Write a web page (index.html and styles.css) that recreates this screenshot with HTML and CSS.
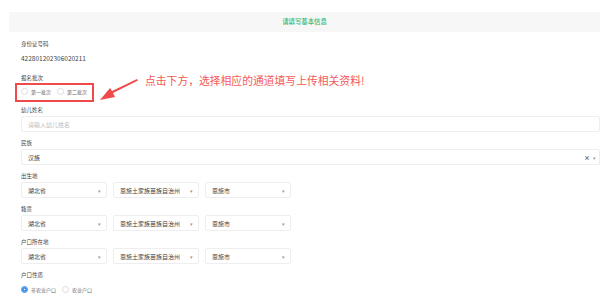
FILE: index.html
```html
<!DOCTYPE html>
<html>
    <head>
        <meta charset="UTF-8" />
        <title>请填写基本信息</title>
        <link rel="stylesheet" href="styles.css">
    </head>
    <body>
        <div class="page">
            <div class="panel-title">请填写基本信息</div>

            <div class="form">
                <div class="field field-first">
                    <div class="label">身份证号码</div>
                    <div class="value">422801202306020211</div>
                </div>

                <div class="field field-batch">
                    <div class="label">报名批次</div>
                    <div class="radio-group">
                        <span class="radio"><span class="dot"></span>第一批次</span>
                        <span class="radio"><span class="dot"></span>第二批次</span>
                    </div>
                </div>

                <div class="field field-name">
                    <div class="label">幼儿姓名</div>
                    <div class="input placeholder">请输入幼儿姓名</div>
                </div>

                <div class="field">
                    <div class="label">民族</div>
                    <div class="input">
                        <span>汉族</span>
                        <span class="icons"><span class="clear">&times;</span><span class="caret">&#9662;</span></span>
                    </div>
                </div>

                <div class="field">
                    <div class="label">出生地</div>
                    <div class="select-row">
                        <div class="input select"><span>湖北省</span><span class="caret">&#9662;</span></div>
                        <div class="input select"><span>恩施土家族苗族自治州</span><span class="caret">&#9662;</span></div>
                        <div class="input select"><span>恩施市</span><span class="caret">&#9662;</span></div>
                    </div>
                </div>

                <div class="field">
                    <div class="label">籍贯</div>
                    <div class="select-row">
                        <div class="input select"><span>湖北省</span><span class="caret">&#9662;</span></div>
                        <div class="input select"><span>恩施土家族苗族自治州</span><span class="caret">&#9662;</span></div>
                        <div class="input select"><span>恩施市</span><span class="caret">&#9662;</span></div>
                    </div>
                </div>

                <div class="field">
                    <div class="label">户口所在地</div>
                    <div class="select-row">
                        <div class="input select"><span>湖北省</span><span class="caret">&#9662;</span></div>
                        <div class="input select"><span>恩施土家族苗族自治州</span><span class="caret">&#9662;</span></div>
                        <div class="input select"><span>恩施市</span><span class="caret">&#9662;</span></div>
                    </div>
                </div>

                <div class="field">
                    <div class="label label-last">户口性质</div>
                    <div class="radio-group">
                        <span class="radio checked"><span class="dot"></span>非农业户口</span>
                        <span class="radio"><span class="dot"></span>农业户口</span>
                    </div>
                </div>
            </div>

            <!-- annotation drawn over the screenshot -->
            <div class="note-box"></div>
            <svg class="note-arrow" width="44" height="24" viewBox="0 0 44 24">
                <polygon points="41,0 42,1.5 17,14 19,18 4,21 14,9 16,12" fill="#f04a4a" />
            </svg>
            <div class="note-text">点击下方，选择相应的通道填写上传相关资料!</div>
        </div>
    </body>
</html>
```

FILE: styles.css
```css
body {
    margin: 0;
    background-color: #fff;
    font-family: "Noto Sans CJK SC", "Noto Sans", sans-serif;
    color: #555;
    overflow: hidden;
}

.page {
    position: relative;
    width: 600px;
    height: 307px;
    padding-left: 9px;
    padding-top: 12px;
    box-sizing: border-box;
}

.panel-title {
    height: 20px;
    line-height: 20px;
    background-color: #f7f7f7;
    color: #34b87a;
    font-size: 6.4px;
    font-weight: 500;
    text-align: center;
}

.form {
    padding-left: 12px;
}

.field {
    padding-top: 7px;
}

.field-first {
    padding-top: 8px;
}

.field-first .label {
    margin-bottom: 5px;
}

.field-batch {
    padding-top: 11px;
}

.field-batch .label {
    margin-bottom: 4px;
}

.field-name {
    padding-top: 10px;
}

.label {
    height: 8px;
    line-height: 8px;
    font-size: 5.5px;
    color: #444;
    margin-bottom: 2px;
}

.label-last {
    margin-bottom: 5px;
}

.value {
    line-height: 10px;
    font-size: 6.5px;
    color: #444;
}

.radio-group {
    display: flex;
    align-items: center;
    gap: 6px;
    height: 10px;
}

.radio {
    display: flex;
    align-items: center;
    gap: 3px;
    font-size: 5px;
    color: #666;
}

.dot {
    width: 5px;
    height: 5px;
    border: 1px solid #dcdcdc;
    border-radius: 50%;
    background-color: #fff;
}

.radio.checked .dot {
    border-color: #3d8eea;
    background-color: #fff;
    box-shadow: inset 0 0 0 1.8px #3d8eea;
}

.input {
    display: flex;
    justify-content: space-between;
    align-items: center;
    height: 16px;
    padding: 0 3px 0 6px;
    border: 1px solid #eeeeee;
    border-radius: 2px;
    box-sizing: border-box;
    font-size: 6px;
    color: #444;
}

.placeholder {
    color: #bbb;
}

.icons {
    display: flex;
    gap: 3px;
    align-items: center;
}

.clear {
    font-size: 6px;
    color: #555;
    font-weight: bold;
}

.caret {
    font-size: 5px;
    color: #999;
}

.select-row {
    display: flex;
    gap: 6px;
}

.select {
    width: 86px;
    padding-right: 5px;
}

.note-box {
    position: absolute;
    left: 15px;
    top: 83px;
    width: 79px;
    height: 19px;
    border: 2px solid #f04a4a;
    box-sizing: border-box;
}

.note-arrow {
    position: absolute;
    left: 96px;
    top: 79px;
}

.note-text {
    position: absolute;
    left: 145px;
    top: 72px;
    font-size: 10.8px;
    line-height: 16px;
    color: #f25a5a;
    white-space: nowrap;
}
```
